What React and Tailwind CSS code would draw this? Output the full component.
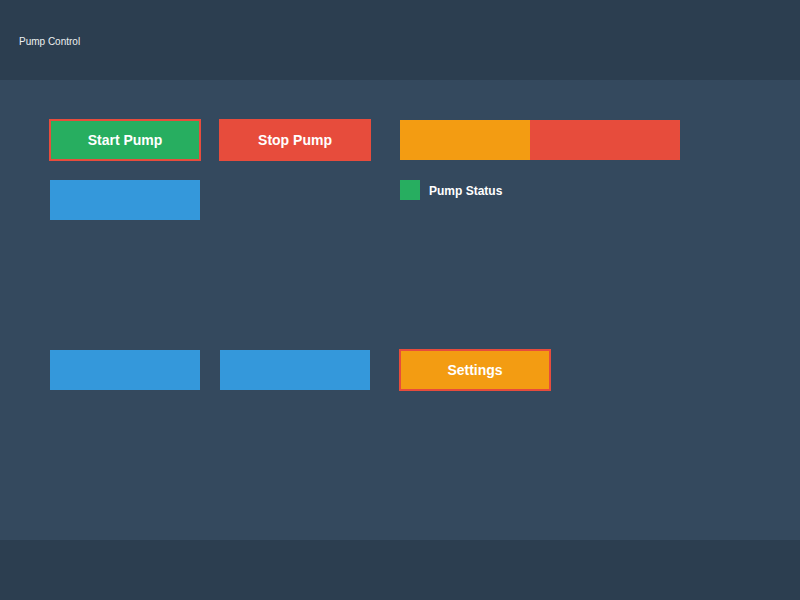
export default function App() {
  const font = { fontFamily: '"Liberation Sans", Arial, sans-serif' };
  return (
    <div className="w-[800px] h-[600px] flex flex-col" style={font}>
      <header className="h-[80px] shrink-0 bg-[#2c3e50] flex items-center pl-[19px] pt-[2px]">
        <span className="text-[10px] text-[#ecf0f1]">Pump Control</span>
      </header>
      <main className="h-[460px] shrink-0 bg-[#34495e] pl-[50px] pt-[40px] flex flex-col">
        <div className="flex items-start h-[40px]">
          <div className="w-[150px] h-[40px] flex">
            <button className="-m-[1px] w-[152px] h-[42px] box-border border-2 border-[#e74c3c] bg-[#27ae60] text-white font-bold text-[14px] flex items-center justify-center">
              Start Pump
            </button>
          </div>
          <div className="w-[150px] h-[40px] ml-[20px] flex">
            <button className="-m-[1px] w-[152px] h-[42px] bg-[#e74c3c] text-white font-bold text-[14px] flex items-center justify-center">
              Stop Pump
            </button>
          </div>
          <div className="ml-[30px] flex h-[40px]">
            <div className="w-[130px] h-[40px] bg-[#f39c12]" />
            <div className="w-[150px] h-[40px] bg-[#e74c3c]" />
          </div>
        </div>
        <div className="flex items-start mt-[20px] h-[40px]">
          <div className="w-[150px] h-[40px] bg-[#3498db]" />
          <div className="ml-[200px] flex items-center h-[20px]">
            <div className="w-[20px] h-[20px] bg-[#27ae60]" />
            <span className="ml-[9px] pt-[2px] text-white font-bold text-[12px]">Pump Status</span>
          </div>
        </div>
        <div className="flex items-start mt-[130px] h-[40px]">
          <div className="w-[150px] h-[40px] bg-[#3498db]" />
          <div className="w-[150px] h-[40px] ml-[20px] bg-[#3498db]" />
          <div className="w-[150px] h-[40px] ml-[30px] flex">
            <button className="-m-[1px] w-[152px] h-[42px] box-border border-2 border-[#e74c3c] bg-[#f39c12] text-white font-bold text-[14px] flex items-center justify-center">
              Settings
            </button>
          </div>
        </div>
      </main>
      <footer className="h-[60px] shrink-0 bg-[#2c3e50]" />
    </div>
  );
}
